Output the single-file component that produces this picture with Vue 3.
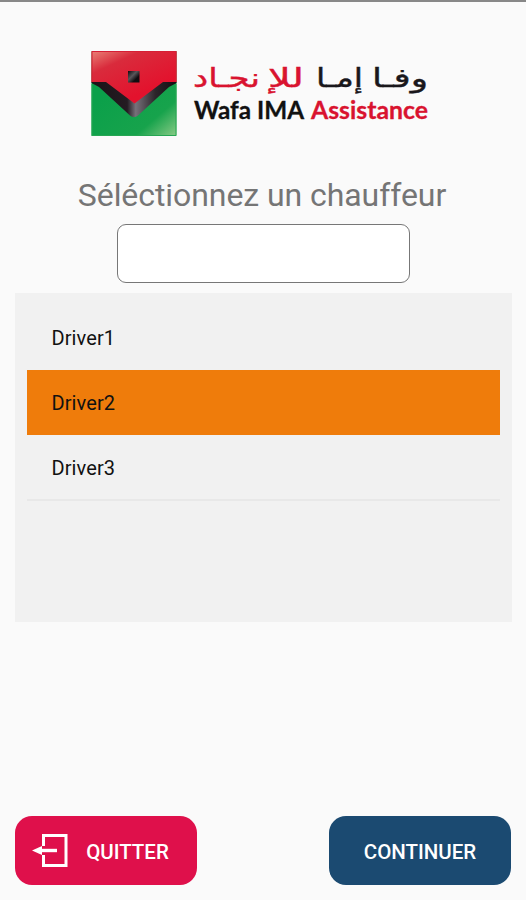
<script setup>
import {ref} from "vue";

const search = ref('')
const selected = ref(2)

const drivers = ref([
  {
    "id": 1,
    "name": "Driver1"
  },
  {
    "id": 2,
    "name": "Driver2"
  },
  {
    "id": 3,
    "name": "Driver3"
  }
])

const selectDriver = (driver) => {
  selected.value = driver.id
}
</script>

<template>
  <main class="screen">
    <svg class="logo" width="340" height="88" viewBox="0 0 340 88">
      <defs>
        <linearGradient id="red" x1="0" y1="0" x2="0.6" y2="0.8">
          <stop offset="0" stop-color="#e98276" />
          <stop offset="0.35" stop-color="#d92b3c" />
          <stop offset="1" stop-color="#e3122d" />
        </linearGradient>
        <linearGradient id="green" x1="0.4" y1="0.3" x2="1" y2="1">
          <stop offset="0" stop-color="#0ba04a" />
          <stop offset="0.65" stop-color="#17a34c" />
          <stop offset="1" stop-color="#8acb86" />
        </linearGradient>
        <linearGradient id="black" x1="0" y1="0" x2="1" y2="0">
          <stop offset="0" stop-color="#1b1217" />
          <stop offset="0.42" stop-color="#241c22" />
          <stop offset="0.52" stop-color="#77717a" />
          <stop offset="0.75" stop-color="#2c252a" />
          <stop offset="1" stop-color="#120c10" />
        </linearGradient>
        <linearGradient id="stud" x1="0" y1="0" x2="1" y2="1">
          <stop offset="0" stop-color="#0c0a0c" />
          <stop offset="0.4" stop-color="#59565a" />
          <stop offset="0.7" stop-color="#100d10" />
        </linearGradient>
      </defs>
      <rect x="1.5" y="1" width="85" height="85" fill="url(#green)" />
      <path d="M1.5 32H86.5V33L79 37L48 65.5Q44 68.5 40 65.5L9 37L1.5 33Z" fill="url(#black)" />
      <path d="M1.5 1H86.5V32H73L44.5 53.5L16 32H1.5Z" fill="url(#red)" />
      <rect x="38" y="21" width="11.5" height="11.5" fill="url(#stud)" />
      <path d="M2 32V1.5H86V32" fill="none" stroke="#d61f35" />
      <path d="M2 34V85.5H86V34" fill="none" stroke="#26a653" />
      <g class="arabic">
        <text x="338" y="37" direction="rtl" textLength="56" lengthAdjust="spacingAndGlyphs">وفـا</text>
        <text x="273" y="37" direction="rtl" textLength="47" lengthAdjust="spacingAndGlyphs">إمـا</text>
        <text class="accent" x="214" y="37" direction="rtl" textLength="36" lengthAdjust="spacingAndGlyphs">للإ</text>
        <text class="accent" x="170" y="37" direction="rtl" textLength="67" lengthAdjust="spacingAndGlyphs">نجـاد</text>
      </g>
      <g class="latin">
        <text x="104" y="68.5" textLength="110" lengthAdjust="spacingAndGlyphs">Wafa IMA</text>
        <text class="accent" x="221" y="68.5" textLength="117" lengthAdjust="spacingAndGlyphs">Assistance</text>
      </g>
    </svg>

    <h1 class="title">Séléctionnez un chauffeur</h1>
    <input v-model="search" class="search" type="text" />

    <section class="list">
      <div
          v-for="driver in drivers"
          :key="driver.id"
          class="driver"
          :class="{ selected: driver.id === selected }"
          @click="selectDriver(driver)"
      >
        {{ driver.name }}
      </div>
    </section>

    <footer class="actions">
      <button class="button quit">
        <svg class="quit-icon" width="36" height="36" viewBox="0 0 36 36">
          <path d="M11.5 13V2.5H34V32.5H11.5V22" fill="none" stroke="#fff" stroke-width="3" />
          <path d="M7 17.5H25" stroke="#fff" stroke-width="3.4" />
          <path d="M0 17.5L10 13V22Z" fill="#fff" />
        </svg>
        <span class="label">QUITTER</span>
      </button>
      <button class="button continue">
        <span class="label">CONTINUER</span>
      </button>
    </footer>
  </main>
</template>

<style>
body {
  margin: 0;
  background: #fafafa;
}
</style>

<style scoped>
.screen {
  box-sizing: border-box;
  display: flex;
  flex-direction: column;
  align-items: center;
  height: 900px;
  padding: 48px 15px 15px;
  border-top: 2px solid #888;
  background: #fafafa;
  font-family: Roboto, "Liberation Sans", sans-serif;
}

.logo {
  flex: none;
  margin-right: 6px;
}

.arabic {
  font: 26px "DejaVu Sans", sans-serif;
  fill: #19171b;
  stroke: #19171b;
  stroke-width: 0.4px;
}

.latin {
  font: bold 24px Lato, sans-serif;
  fill: #111;
  stroke: #111;
  stroke-width: 0.3px;
}

.accent {
  fill: #d9132f;
  stroke: #d9132f;
}

.title {
  margin: 38px 2px 0 0;
  color: #757575;
  font-size: 32px;
  font-weight: 400;
  letter-spacing: -0.07px;
  line-height: 38px;
  white-space: nowrap;
}

.search {
  box-sizing: border-box;
  width: 293px;
  height: 59px;
  margin-top: 10px;
  padding: 0 14px;
  border: 1.5px solid #777;
  border-radius: 9px;
  background: #fff;
  font: inherit;
  font-size: 20px;
  outline: none;
}

.list {
  box-sizing: border-box;
  width: 497px;
  height: 329px;
  margin-top: 10px;
  padding: 12px 12px 0;
  background: #f1f1f1;
}

.driver {
  box-sizing: border-box;
  height: 65px;
  padding-left: 25px;
  color: #111;
  font-size: 20px;
  letter-spacing: 0.1px;
  line-height: 66px;
}

.driver:last-child {
  height: 66px;
  border-bottom: 2px solid #e8e8e8;
}

.driver.selected {
  background: #ef7c0b;
}

.actions {
  display: flex;
  justify-content: space-between;
  width: 100%;
  margin-top: auto;
}

.button {
  display: flex;
  align-items: center;
  justify-content: center;
  width: 182px;
  height: 69px;
  padding: 0;
  border: 0;
  border-radius: 17px;
  color: #fff;
  font-family: inherit;
  font-size: 20.5px;
  font-weight: 500;
}

.label {
  padding-top: 2px;
}

.quit {
  gap: 18px;
  padding-right: 11px;
  background: #df104b;
}

.continue {
  background: #1b4a71;
}
</style>
